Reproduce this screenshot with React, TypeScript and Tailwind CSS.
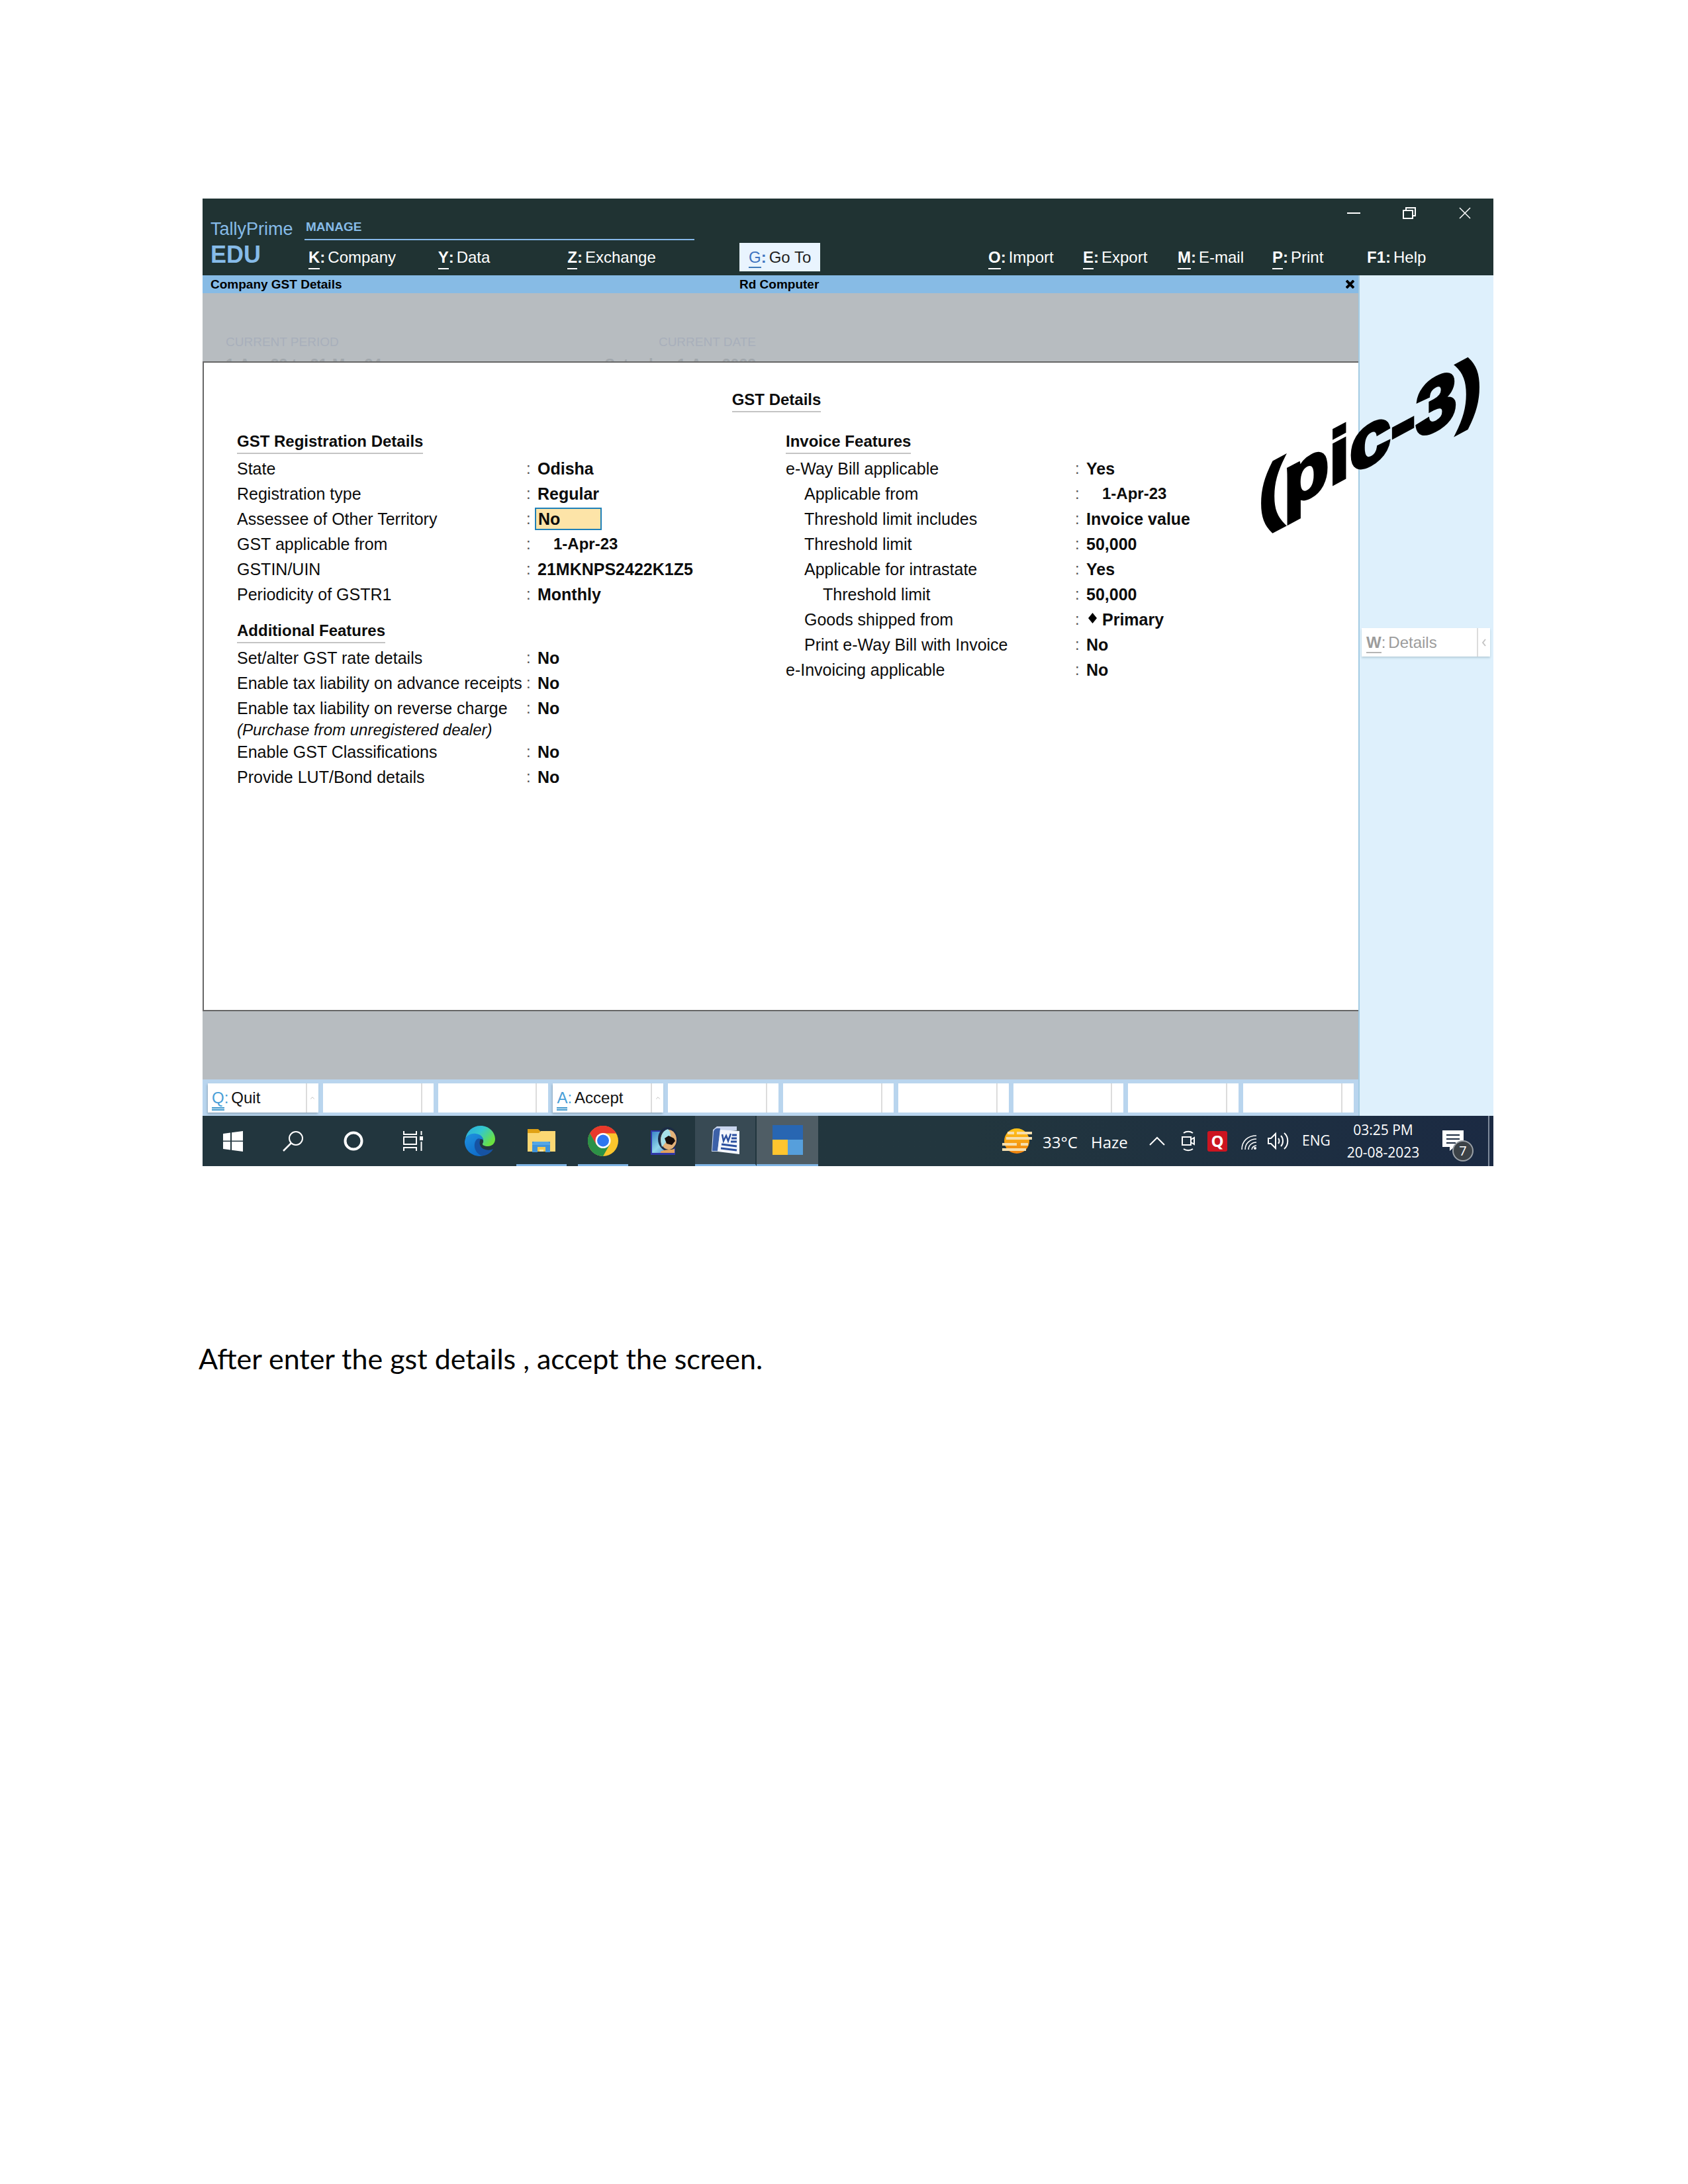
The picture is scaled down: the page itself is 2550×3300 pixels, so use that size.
import React from "react";
import { ChevronUp } from "lucide-react";

type MenuItem = { hotkey: string; label: string; underline?: boolean };

const manageMenu: MenuItem[] = [
  { hotkey: "K", label: "Company" },
  { hotkey: "Y", label: "Data" },
  { hotkey: "Z", label: "Exchange" },
];

const toolMenu: MenuItem[] = [
  { hotkey: "O", label: "Import" },
  { hotkey: "E", label: "Export" },
  { hotkey: "M", label: "E-mail" },
  { hotkey: "P", label: "Print" },
  { hotkey: "F1", label: "Help", underline: false },
];

function MenuButton({ item }: { item: MenuItem }) {
  return (
    <button type="button" className="flex items-start text-left text-[24px] leading-[28px] text-white">
      <span
        className={
          item.underline === false
            ? "font-bold"
            : "border-b-2 border-white pb-[2px] font-bold"
        }
      >
        {item.hotkey}
      </span>
      <span className="mr-1 font-bold">:</span>
      <span>{item.label}</span>
    </button>
  );
}

function WindowControls() {
  return (
    <div className="flex h-[31px] items-end justify-end gap-16 pr-[33px] text-white">
      <button type="button" aria-label="Minimize">
        <svg width="20" height="18" viewBox="0 0 20 18">
          <path d="M0 9H20" stroke="currentColor" strokeWidth="2" />
        </svg>
      </button>
      <button type="button" aria-label="Restore">
        <svg width="20" height="18" viewBox="0 0 20 18" fill="none" stroke="currentColor" strokeWidth="2">
          <path d="M1 5H15V17H1Z" />
          <path d="M5 5V1H19V13H15" />
        </svg>
      </button>
      <button type="button" aria-label="Close">
        <svg width="20" height="18" viewBox="0 0 20 18" fill="none" stroke="currentColor" strokeWidth="1.500">
          <path d="M2 1L18 17M18 1L2 17" />
        </svg>
      </button>
    </div>
  );
}

function Header() {
  return (
    <header className="h-[116px] bg-[#203333]">
      <WindowControls />
      <div className="flex items-start">
        <div className="w-[154px] pl-3 text-[#86bbe8]">
          <div className="text-[27px] leading-[30px]">TallyPrime</div>
          <div className="text-[36px] font-bold leading-[48px]">EDU</div>
        </div>
        <div className="w-[589px]">
          <div className="border-b-2 border-[#86b8ea] pb-[6px] pl-[2px] text-[19px] font-bold leading-[24px] text-[#86bbe8]">
            MANAGE
          </div>
          <nav className="grid grid-cols-3 gap-1 pl-[6px] pt-3">
            {manageMenu.map((m) => (
              <MenuButton key={m.hotkey} item={m} />
            ))}
          </nav>
        </div>
        <button
          type="button"
          className="ml-[68px] mt-[36px] flex h-[43px] w-[122px] items-start bg-[#e9f4fe] pl-[14px] pt-2 text-[24px] leading-[28px] text-[#222]"
        >
          <span className="border-b-2 border-[#3f79b8] text-[#3f74c0]">G</span>
          <span className="mr-1 font-bold text-[#3f74c0]">:</span>
          <span>Go To</span>
        </button>
        <nav className="ml-auto mr-[48px] mt-[44px] grid w-[715px] grid-cols-5">
          {toolMenu.map((m) => (
            <MenuButton key={m.hotkey} item={m} />
          ))}
        </nav>
      </div>
    </header>
  );
}

function Heading({ children }: { children: React.ReactNode }) {
  return (
    <h2 className="w-fit border-b-2 border-[#c4c4c4] pb-[3px] text-[24px] font-bold leading-[28px]">
      {children}
    </h2>
  );
}

type Field = { label: string; value: string; indent?: 1 | 2; kind?: "date" | "input" | "mark"; note?: string };

function FieldRow({ field }: { field: Field }) {
  const pad = field.indent === 2 ? "pl-[56px]" : field.indent === 1 ? "pl-[28px]" : "";
  return (
    <>
      <div className="flex h-[38px] items-center leading-[38px]">
        {field.kind === "input" ? (
          <label htmlFor="territory" className="w-[437px] whitespace-nowrap text-[25px]">
            {field.label}
          </label>
        ) : (
          <span className={"w-[437px] whitespace-nowrap text-[25px] " + pad}>{field.label}</span>
        )}
        <span className="w-[17px] text-[24px] text-[#555]">:</span>
        {field.kind === "input" ? (
          <input
            id="territory"
            defaultValue={field.value}
            className="-ml-1 h-[34px] w-[101px] border-2 border-[#1f80b8] bg-[#fde4a8] pl-[3px] text-[25px] font-bold leading-[30px] outline-none"
          />
        ) : (
          <span
            className={
              field.kind === "date"
                ? "pl-6 text-[24px] font-bold"
                : "flex items-center text-[25px] font-bold"
            }
          >
            {field.kind === "mark" && (
              <svg width="13" height="16" viewBox="0 0 13 16" className="mb-1 ml-[3px] mr-2">
                <path d="M6.500 0L13 8L6.500 16L0 8Z" fill="#000" />
              </svg>
            )}
            {field.value}
          </span>
        )}
      </div>
      {field.note && <div className="text-[24px] italic leading-[28px]">{field.note}</div>}
    </>
  );
}

const registration: Field[] = [
  { label: "State", value: "Odisha" },
  { label: "Registration type", value: "Regular" },
  { label: "Assessee of Other Territory", value: "No", kind: "input" },
  { label: "GST applicable from", value: "1-Apr-23", kind: "date" },
  { label: "GSTIN/UIN", value: "21MKNPS2422K1Z5" },
  { label: "Periodicity of GSTR1", value: "Monthly" },
];

const additional: Field[] = [
  { label: "Set/alter GST rate details", value: "No" },
  { label: "Enable tax liability on advance receipts", value: "No" },
  { label: "Enable tax liability on reverse charge", value: "No", note: "(Purchase from unregistered dealer)" },
  { label: "Enable GST Classifications", value: "No" },
  { label: "Provide LUT/Bond details", value: "No" },
];

const invoice: Field[] = [
  { label: "e-Way Bill applicable", value: "Yes" },
  { label: "Applicable from", value: "1-Apr-23", indent: 1, kind: "date" },
  { label: "Threshold limit includes", value: "Invoice value", indent: 1 },
  { label: "Threshold limit", value: "50,000", indent: 1 },
  { label: "Applicable for intrastate", value: "Yes", indent: 1 },
  { label: "Threshold limit", value: "50,000", indent: 2 },
  { label: "Goods shipped from", value: "Primary", indent: 1, kind: "mark" },
  { label: "Print e-Way Bill with Invoice", value: "No", indent: 1 },
  { label: "e-Invoicing applicable", value: "No" },
];

function FieldGroup({ title, fields }: { title: string; fields: Field[] }) {
  return (
    <section>
      <Heading>{title}</Heading>
      <div className="mt-[3px]">
        {fields.map((f, i) => (
          <FieldRow key={i} field={f} />
        ))}
      </div>
    </section>
  );
}

function GstPanel() {
  return (
    <div className="min-h-[982px] border-y-2 border-l-2 border-[#666] bg-white pt-[42px] text-[#0c0c0c]">
      <div className="flex justify-center pr-[14px]">
        <h1 className="border-b-2 border-[#c4c4c4] pb-[3px] text-[24px] font-bold leading-[28px]">GST Details</h1>
      </div>
      <div className="mt-[30px] flex pl-[50px]">
        <div className="flex w-[829px] flex-col gap-[22px]">
          <FieldGroup title="GST Registration Details" fields={registration} />
          <FieldGroup title="Additional Features" fields={additional} />
        </div>
        <FieldGroup title="Invoice Features" fields={invoice} />
      </div>
    </div>
  );
}

const footerButtons: (MenuItem | null)[] = [
  { hotkey: "Q", label: "Quit" },
  null,
  null,
  { hotkey: "A", label: "Accept" },
  null,
  null,
  null,
  null,
  null,
  null,
];

function FooterStrip() {
  return (
    <div className="flex h-[55px] gap-[7px] bg-[#b9d5ee] pb-[5px] pl-2 pr-[7px] pt-[6px]">
      {footerButtons.map((b, i) => (
        <button
          key={i}
          type="button"
          aria-label={b ? b.label : "Empty"}
          className={
            b
              ? "flex flex-1 items-stretch bg-white text-[24px] leading-[28px] shadow-[-1px_2px_3px_#8fa9bd]"
              : "flex flex-1 items-stretch bg-white"
          }
        >
          <span className="flex flex-1 items-start border-r-2 border-[#dcdcdc] pl-[6px] pt-2">
            {b && (
              <>
                <span className="h-[33px] border-b-[5px] border-double border-[#3f97cc] leading-[28px] text-[#4a9fd8]">
                  {b.hotkey}
                </span>
                <span className="mr-1 text-[#4a9fd8]">:</span>
                <span className="text-[#111]">{b.label}</span>
              </>
            )}
          </span>
          <span className="flex w-[17px] items-center justify-center">
            {b && <ChevronUp size={10} color="#b5b5b5" strokeWidth={2} />}
          </span>
        </button>
      ))}
    </div>
  );
}

function Workspace() {
  return (
    <div className="flex">
      <main className="min-w-0 flex-1">
        <div className="flex h-[27px] items-center bg-[#87bbe5] pl-3 pr-[6px] text-[19px] font-bold leading-[24px] text-black">
          <span className="w-[799px]">Company GST Details</span>
          <span>Rd Computer</span>
          <button type="button" aria-label="Close panel" className="ml-auto">
            <svg width="13" height="13" viewBox="0 0 13 13" stroke="#000" strokeWidth="4">
              <path d="M1 1L12 12M12 1L1 12" />
            </svg>
          </button>
        </div>
        <div className="flex h-[103px] items-start overflow-hidden bg-[#b7bcc0] pl-[35px] pt-[61px] text-[19px] leading-[26px] text-[#a8afbb]">
          <div className="w-[400px]">
            <div>CURRENT PERIOD</div>
            <div className="mt-[8px] text-[23px] font-bold text-[#a2a8ad]">1-Apr-23 to 31-Mar-24</div>
          </div>
          <div className="w-[401px] text-right">
            <div>CURRENT DATE</div>
            <div className="mt-[8px] text-[23px] font-bold text-[#a2a8ad]">Saturday, 1-Apr-2023</div>
          </div>
        </div>
        <GstPanel />
        <div className="h-[103px] bg-[#b7bcc0]" />
        <FooterStrip />
      </main>
      <aside className="w-[204px] border-l-2 border-[#a3cbe3] bg-[#def0fc] pl-[3px] pr-[5px] pt-[533px]">
        <button
          type="button"
          className="flex h-[43px] w-full items-stretch bg-white text-[24px] leading-[28px] text-[#9c9c9c] shadow-[0_2px_3px_#b4ccd9]"
        >
          <span className="flex flex-1 items-start border-r-2 border-[#dcdcdc] pl-[7px] pt-2">
            <span className="border-b-2 border-[#b5b5b5] font-bold">W</span>
            <span className="mr-1">:</span>
            <span>Details</span>
          </span>
          <span className="flex w-[18px] items-center justify-center">
            <svg width="6" height="12" viewBox="0 0 6 12" fill="none" stroke="#c4c4c4" strokeWidth="2">
              <path d="M5 1L1 6L5 11" />
            </svg>
          </span>
        </button>
      </aside>
    </div>
  );
}

function WindowsIcon() {
  return (
    <svg width="30" height="31" viewBox="0 0 30 31" fill="#fff">
      <path d="M0 4L11 2.500V14.500H0ZM13 2.200L30 0V14.500H13ZM0 16H11V28.500L0 27ZM13 16H30V31L13 28.800Z" />
    </svg>
  );
}

function SearchIcon() {
  return (
    <svg width="31" height="31" viewBox="0 0 31 31" fill="none" stroke="#fff" strokeWidth="2">
      <circle cx="20" cy="11" r="10" />
      <path d="M13 18L1 30" strokeWidth="2.500" />
    </svg>
  );
}

function CortanaIcon() {
  return (
    <svg width="30" height="30" viewBox="0 0 30 30" fill="none" stroke="#fff" strokeWidth="4">
      <circle cx="15" cy="15" r="12.500" />
    </svg>
  );
}

function TaskViewIcon() {
  return (
    <svg width="31" height="30" viewBox="0 0 31 30" fill="none" stroke="#fff" strokeWidth="2">
      <path d="M1 9H20V20H1ZM1 0V5H20V0M1 30V25H20V30M27.500 0V6M27.500 16V30" />
      <path d="M25 8H30V14H25Z" fill="#fff" stroke="none" />
    </svg>
  );
}

function EdgeIcon() {
  return (
    <svg width="46" height="46" viewBox="0 0 46 46">
      <defs>
        <linearGradient id="edgeTop" x1="0" y1="0" x2="1" y2="0.600">
          <stop offset="0" stopColor="#2aa7de" />
          <stop offset="0.500" stopColor="#33c7cf" />
          <stop offset="1" stopColor="#6be23f" />
        </linearGradient>
        <linearGradient id="edgeLeft" x1="0" y1="0" x2="0.600" y2="1">
          <stop offset="0" stopColor="#1f93e0" />
          <stop offset="1" stopColor="#0f6bc8" />
        </linearGradient>
      </defs>
      <path
        d="M1 20C3 8 12 0 24 0C37 0 46 10 46 20C46 27 41 31 35 31C30 31 26 29 27 27C29 25 29 18 23 15C15 11 4 13 1 20Z"
        fill="url(#edgeTop)"
      />
      <path
        d="M0 24C1 15 9 11 17 12C24 13 28 17 28 22C26 19 19 19 17 26C15 36 23 43 33 43C30 45 26 46 22 46C9 45 0 36 0 24Z"
        fill="url(#edgeLeft)"
      />
      <path d="M17 22C13 28 14 40 25 45C33 46 40 41 43 35C38 38 27 37 24 31C22 28 22 24 24 20C21 18 18 20 17 22Z" fill="#1653a3" />
    </svg>
  );
}

function FolderIcon() {
  return (
    <svg width="42" height="36" viewBox="0 0 42 36">
      <path d="M0 0H16L19 3V7H0Z" fill="#e0a114" />
      <path d="M0 6H17L20 3H42V34H0Z" fill="#fbd773" />
      <path d="M7 35V19H34V35H27V27H15V35Z" fill="#3f93d9" />
      <path d="M7 22L10 19H31L34 22V24H7Z" fill="#56a7e6" />
      <path d="M15 27H27V34H15Z" fill="#f6c94d" />
      <path d="M18 31H24V34H18Z" fill="#fbe6a2" />
    </svg>
  );
}

function ChromeIcon() {
  return (
    <svg width="46" height="46" viewBox="0 0 46 46">
      <circle cx="23" cy="23" r="23" fill="#fbc52c" />
      <path d="M3 11.500A23 23 0 0 1 43 11.500H23L13 29Z" fill="#e8392b" />
      <path d="M3.080 11.500A23 23 0 0 0 23 46L33 28.500L13 28.500Z" fill="#2c9147" />
      <circle cx="23" cy="22.500" r="11.500" fill="#fff" />
      <circle cx="23" cy="22.500" r="9" fill="#2d76f0" />
    </svg>
  );
}

function EyeIcon() {
  return (
    <svg width="44" height="44" viewBox="0 0 44 44">
      <defs>
        <linearGradient id="eyePage" x1="0" y1="0" x2="1" y2="1">
          <stop offset="0" stopColor="#3a86c9" />
          <stop offset="0.500" stopColor="#8fd6ea" />
          <stop offset="1" stopColor="#4467c8" />
        </linearGradient>
      </defs>
      <path d="M1 6H38V43H1Z" fill="#3037a8" />
      <path d="M3 8H36V40H3Z" fill="url(#eyePage)" />
      <ellipse cx="27" cy="19" rx="15" ry="18" fill="#1c2c45" />
      <ellipse cx="28" cy="20" rx="12" ry="15" fill="#e3b178" />
      <path d="M27 4C17 7 14 19 18 31C22 27 26 20 31 17C32 12 30 7 27 4Z" fill="#a5dfe8" />
      <path d="M22 18L28 14L36 18L38 22L33 28L25 26Z" fill="#160d0b" />
      <path d="M16 38C24 34 31 36 37 34V40H16Z" fill="#e2a35e" />
    </svg>
  );
}

function WordIcon() {
  return (
    <svg width="42" height="42" viewBox="0 0 42 42">
      <path d="M2 5L8 0H38V6L14 8V38H0Z" fill="#c9d5ee" />
      <path d="M3 8C4 3 8 2 13 3L9 37H1Z" fill="#3d61a8" />
      <path d="M13 5L42 7V42L9 38Z" fill="#f4f7fd" />
      <path d="M16 12L18 22L22 14L25 22L29 11" fill="none" stroke="#2b509f" strokeWidth="2.500" />
      <path d="M31 13H38M30 18H38M29 23H38M15 27L38 30M14 33L38 36" stroke="#2b509f" strokeWidth="3" />
    </svg>
  );
}

function TallyIcon() {
  return (
    <svg width="46" height="45" viewBox="0 0 46 45">
      <path d="M0 0H46V22H0Z" fill="#2866b2" />
      <path d="M0 22H23V45H0Z" fill="#ffc52f" />
      <path d="M23 22H46V45H23Z" fill="#569fdc" />
    </svg>
  );
}

function HazeIcon() {
  return (
    <svg width="45" height="40" viewBox="0 0 45 40">
      <defs>
        <linearGradient id="sun" x1="0" y1="0" x2="0" y2="1">
          <stop offset="0" stopColor="#ffc51a" />
          <stop offset="1" stopColor="#f0820f" />
        </linearGradient>
      </defs>
      <circle cx="22" cy="20" r="19" fill="url(#sun)" />
      <path d="M8 8H18M22 8H45M6 16H45M0 25H22M28 25H39M0 33H36" stroke="#f6dfae" strokeWidth="4" />
    </svg>
  );
}

type Task = { name: string; icon: React.ReactNode; state?: "running" | "open" | "active" };

const systemTasks: Task[] = [
  { name: "Start", icon: <WindowsIcon /> },
  { name: "Search", icon: <SearchIcon /> },
  { name: "Cortana", icon: <CortanaIcon /> },
  { name: "Task view", icon: <TaskViewIcon /> },
];

const appTasks: Task[] = [
  { name: "Edge", icon: <EdgeIcon /> },
  { name: "File Explorer", icon: <FolderIcon />, state: "running" },
  { name: "Chrome", icon: <ChromeIcon />, state: "running" },
  { name: "Photo viewer", icon: <EyeIcon /> },
  { name: "Word", icon: <WordIcon />, state: "open" },
  { name: "TallyPrime", icon: <TallyIcon />, state: "active" },
];

const taskStyles = {
  idle: "flex w-[93px] items-center justify-center",
  running:
    "relative flex w-[93px] items-center justify-center after:absolute after:bottom-0 after:h-[3px] after:w-[76px] after:bg-[#7fb4e4]",
  open: "flex w-[93px] items-center justify-center border-b-[3px] border-r-2 border-b-[#7fb4e4] border-r-[#22363e] bg-[#384a54]",
  active: "flex w-[93px] items-center justify-center border-b-[3px] border-[#7fb4e4] bg-[#4f5d65]",
};

function Taskbar() {
  return (
    <footer
      className="flex h-[76px] items-stretch bg-linear-to-r from-[#22363e] from-60% to-[#1b2a43] text-white"
      style={{ fontFamily: '"Open Sans", "Noto Sans", sans-serif' }}
    >
      {systemTasks.map((t) => (
        <button key={t.name} type="button" aria-label={t.name} className="flex w-[91px] items-center justify-center">
          {t.icon}
        </button>
      ))}
      <div className="ml-2 flex">
        {appTasks.map((t) => (
          <button key={t.name} type="button" aria-label={t.name} className={taskStyles[t.state ?? "idle"]}>
            {t.icon}
          </button>
        ))}
      </div>
      <div className="ml-auto flex items-center text-[21px]">
        <HazeIcon />
        <span className="ml-4 mt-1 w-[73px] text-[24px]">33°C</span>
        <span className="mt-1 w-[88px] text-[24px]">Haze</span>
        <button type="button" aria-label="Show hidden icons" className="mr-6">
          <svg width="24" height="14" viewBox="0 0 24 14" fill="none" stroke="#fff" strokeWidth="2">
            <path d="M1 13L12 2L23 13" />
          </svg>
        </button>
        <svg width="21" height="32" viewBox="0 0 21 32" fill="none" stroke="#fff" strokeWidth="2" className="mr-[19px]">
          <path d="M2 10H15V22H2ZM15 14L20 11V21L15 18M4 4C8 1 14 1 18 4M4 28C8 31 14 31 18 28" />
        </svg>
        <span className="mr-[21px] flex h-[31px] w-[30px] items-center justify-center rounded-[3px] bg-[#cd1420] text-[24px] font-bold leading-[30px]">
          Q
        </span>
        <svg width="24" height="24" viewBox="0 0 24 24" fill="none" stroke="#fff" strokeWidth="1.500" className="mr-4 mt-1">
          <path d="M1 23C1 10 10 2 23 2M6 23C6 14 13 7 23 7M11 23C11 17 16 12 23 12M16 23C16 20 19 17 23 17" />
          <circle cx="21" cy="21" r="2" fill="#fff" stroke="none" />
        </svg>
        <svg width="32" height="28" viewBox="0 0 32 28" fill="none" stroke="#fff" strokeWidth="2" className="mr-[20px]">
          <path d="M1 10H5L12 3V25L5 18H1ZM16 10C18 12 18 16 16 18M20 6C24 10 24 18 20 22M25 2C32 8 32 20 25 26" />
        </svg>
        <span className="mr-6 w-[43px]">ENG</span>
        <div className="mr-[34px] w-[111px] whitespace-nowrap text-center leading-[34px]">
          <div>03:25 PM</div>
          <div>20-08-2023</div>
        </div>
        <div className="relative mr-[21px] mt-4 h-[48px] w-[48px]">
          <svg width="48" height="48" viewBox="0 0 48 48">
            <path d="M0 0H32V25H18L11 31V25H0Z" fill="#fff" />
            <path d="M6 7H26M6 13H26M6 19H20" stroke="#1d2c42" strokeWidth="2" />
            <circle cx="31" cy="31" r="15" fill="#3c4247" stroke="#9aa0a6" strokeWidth="2" />
          </svg>
          <span className="absolute left-[16px] top-[16px] w-[30px] text-center text-[20px] leading-[30px]">7</span>
        </div>
        <span className="mr-[6px] h-[76px] w-[2px] bg-[#7f8b9c]" />
      </div>
    </footer>
  );
}

/* Slanted word-art caption lying over the window's right edge */
function PictureTag() {
  return (
    <svg className="absolute right-[6px] top-[190px]" width="360" height="350" viewBox="0 0 360 350">
      <text
        transform="translate(12 301) skewY(-28)"
        fontFamily='"Liberation Sans", sans-serif'
        fontWeight="700"
        fontSize="112"
        fill="#000"
        stroke="#000"
        strokeWidth="5"
      >
        (pic-3)
      </text>
    </svg>
  );
}

export default function App() {
  return (
    <div className="min-h-[3300px] bg-white pl-[300px] pr-[294px] pt-[300px]">
      <div
        className="relative ml-[6px]"
        style={{ fontFamily: '"Liberation Sans", Arial, sans-serif' }}
      >
        <Header />
        <Workspace />
        <Taskbar />
        <PictureTag />
      </div>
      <p
        className="mt-[263px] text-[43px] leading-[56px] text-black"
        style={{ fontFamily: "Lato, sans-serif" }}
      >
        After enter the gst details , accept the screen.
      </p>
    </div>
  );
}
